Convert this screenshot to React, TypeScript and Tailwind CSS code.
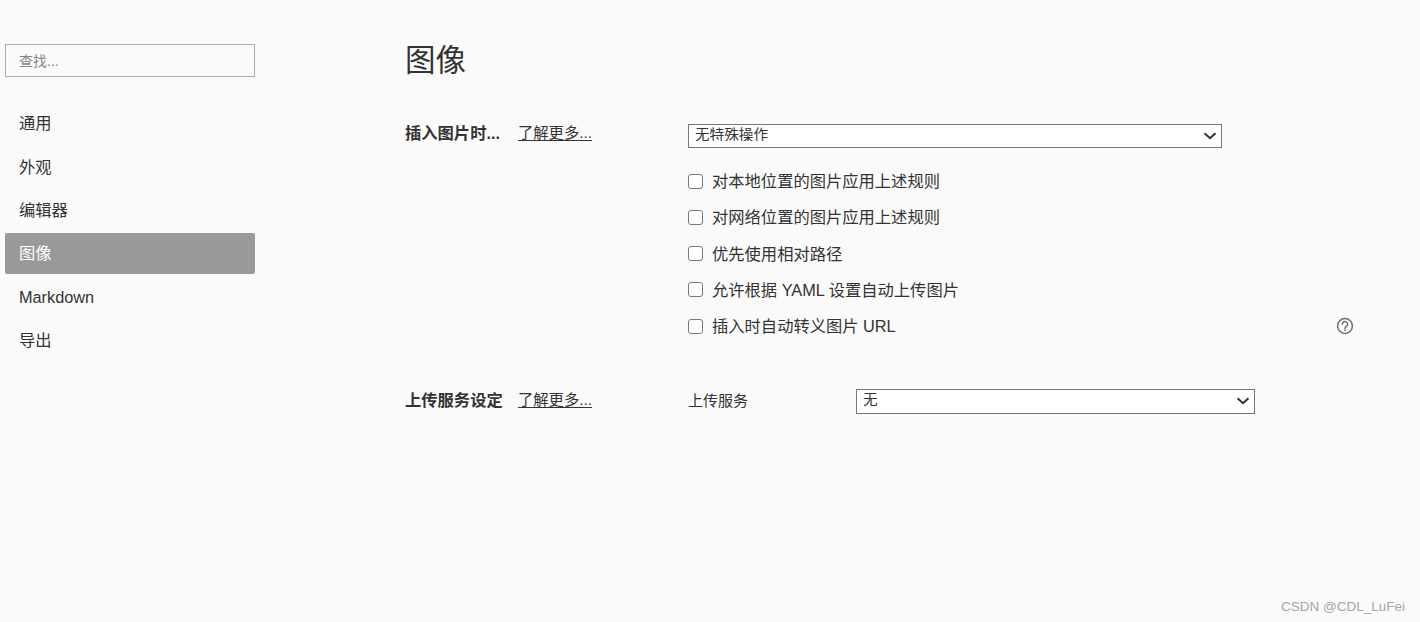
import React from 'react';

const font = { fontFamily: '"Liberation Sans", "Noto Sans CJK SC", sans-serif' };

const navItems = ['通用', '外观', '编辑器', '图像', 'Markdown', '导出'];

const checks = [
  '对本地位置的图片应用上述规则',
  '对网络位置的图片应用上述规则',
  '优先使用相对路径',
  '允许根据 YAML 设置自动上传图片',
  '插入时自动转义图片 URL',
];

const Sidebar: React.FC = () => (
  <aside className="w-[255px] shrink-0 pl-[5px] pt-[44px]">
    <input
      placeholder="查找..."
      className="h-[33px] w-full border border-[#ababab] bg-transparent px-[13px] text-[14px] outline-none placeholder:text-[#858585]"
    />
    <nav className="mt-[26px] flex flex-col gap-[2.4px]">
      {navItems.map((item) => (
        <div
          key={item}
          className={
            item === '图像'
              ? 'flex h-[41px] items-center rounded-[2px] bg-[#999999] px-[14px] text-[16.3px] text-white'
              : 'flex h-[41px] items-center px-[14px] text-[16.3px] text-[#333333]'
          }
        >
          {item}
        </div>
      ))}
    </nav>
  </aside>
);

const HelpIcon: React.FC = () => (
  <svg width="18" height="18" viewBox="0 0 18 18" fill="none" stroke="#6e6e6e" strokeWidth="1.5">
    <circle cx="9" cy="9" r="7.4" />
    <path d="M6.4 7.2a2.6 2.6 0 1 1 4 2.1c-.9.6-1.4 1-1.4 2.1" strokeLinecap="round" />
    <path d="M9 12.6v1.4" />
  </svg>
);

const Chevron: React.FC = () => (
  <svg
    width="14"
    height="8"
    viewBox="0 0 14 8"
    fill="none"
    stroke="#333333"
    strokeWidth="2"
    className="pointer-events-none absolute top-[9px] right-[5px]"
  >
    <path d="M1.5 1.2 7 6.2l5.5-5" />
  </svg>
);

const LearnMore: React.FC = () => (
  <a className="text-[15.3px] leading-[20px] text-[#333333] underline underline-offset-2">了解更多...</a>
);

const Select: React.FC<{ value: string; className: string; pad: string }> = ({ value, className, pad }) => (
  <div className={`relative ${className}`}>
    <select className={`h-full w-full appearance-none border border-[#767676] bg-white pl-[6px] text-[14.6px] text-[#333333] outline-none ${pad}`}>
      <option>{value}</option>
    </select>
    <Chevron />
  </div>
);

export default function App() {
  return (
    <div style={font} className="relative flex h-[622px] w-full overflow-hidden bg-[#fafafa] text-[#333333]">
      <Sidebar />
      <main className="ml-[150px] flex-1 pt-[39px]">
        <h1 className="h-[42px] text-[30.5px] leading-[42px] font-normal">图像</h1>

        <section className="mt-[42px] flex">
          <div className="flex w-[283px] shrink-0 items-start">
            <span className="w-[113px] text-[16.3px] leading-[20px] font-bold">插入图片时...</span>
            <LearnMore />
          </div>
          <div className="flex-1">
            <Select value="无特殊操作" className="h-[24px] w-[534px]" pad="pb-[6px]" />
            <div className="mt-[22px] flex flex-col gap-[12.25px]">
              {checks.map((text, i) => (
                <label key={text} className="flex h-[24px] items-center text-[16.3px] leading-[24px]">
                  <input
                    type="checkbox"
                    className="m-0 h-[15px] w-[15px] appearance-none rounded-[3px] border border-[#767676] bg-white"
                  />
                  <span className="ml-[9px]">{text}</span>
                  {i === 4 && (
                    <span className="mr-[66px] ml-auto">
                      <HelpIcon />
                    </span>
                  )}
                </label>
              ))}
            </div>
          </div>
        </section>

        <section className="mt-[50px] flex">
          <div className="flex w-[283px] shrink-0 items-start pt-[2px]">
            <span className="w-[113px] text-[16.3px] leading-[20px] font-bold">上传服务设定</span>
            <LearnMore />
          </div>
          <div className="flex items-center">
            <span className="w-[168px] pt-[1px] text-[15px]">上传服务</span>
            <Select value="无" className="h-[25px] w-[399px]" pad="pb-[3px]" />
          </div>
        </section>
      </main>
      <div className="absolute right-[15px] bottom-[5px] text-[13.5px] text-[#a6a6a6]">CSDN @CDL_LuFei</div>
    </div>
  );
}
